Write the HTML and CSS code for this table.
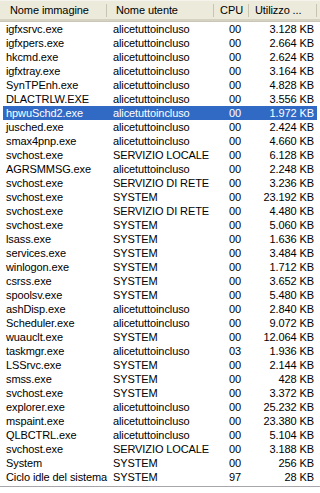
FILE: index.html
```html
<!DOCTYPE html>
<html>
<head>
<meta charset="utf-8">
<link rel="stylesheet" href="styles.css">
</head>
<body>
<div class="list">
  <div class="head">
    <div class="hc c1">Nome immagine</div>
    <div class="hc c2">Nome utente</div>
    <div class="hc c3">CPU</div>
    <div class="hc c4">Utilizzo ...</div>
  </div>
  <div class="rows">
    <div class="row"><span class="d1">igfxsrvc.exe</span><span class="d2">alicetuttoincluso</span><span class="d3">00</span><span class="d4">3.128 KB</span></div>
    <div class="row"><span class="d1">igfxpers.exe</span><span class="d2">alicetuttoincluso</span><span class="d3">00</span><span class="d4">2.664 KB</span></div>
    <div class="row"><span class="d1">hkcmd.exe</span><span class="d2">alicetuttoincluso</span><span class="d3">00</span><span class="d4">2.624 KB</span></div>
    <div class="row"><span class="d1">igfxtray.exe</span><span class="d2">alicetuttoincluso</span><span class="d3">00</span><span class="d4">3.164 KB</span></div>
    <div class="row"><span class="d1">SynTPEnh.exe</span><span class="d2">alicetuttoincluso</span><span class="d3">00</span><span class="d4">4.828 KB</span></div>
    <div class="row"><span class="d1">DLACTRLW.EXE</span><span class="d2">alicetuttoincluso</span><span class="d3">00</span><span class="d4">3.556 KB</span></div>
    <div class="row sel"><span class="d1">hpwuSchd2.exe</span><span class="d2">alicetuttoincluso</span><span class="d3">00</span><span class="d4">1.972 KB</span></div>
    <div class="row"><span class="d1">jusched.exe</span><span class="d2">alicetuttoincluso</span><span class="d3">00</span><span class="d4">2.424 KB</span></div>
    <div class="row"><span class="d1">smax4pnp.exe</span><span class="d2">alicetuttoincluso</span><span class="d3">00</span><span class="d4">4.660 KB</span></div>
    <div class="row"><span class="d1">svchost.exe</span><span class="d2">SERVIZIO LOCALE</span><span class="d3">00</span><span class="d4">6.128 KB</span></div>
    <div class="row"><span class="d1">AGRSMMSG.exe</span><span class="d2">alicetuttoincluso</span><span class="d3">00</span><span class="d4">2.248 KB</span></div>
    <div class="row"><span class="d1">svchost.exe</span><span class="d2">SERVIZIO DI RETE</span><span class="d3">00</span><span class="d4">3.236 KB</span></div>
    <div class="row"><span class="d1">svchost.exe</span><span class="d2">SYSTEM</span><span class="d3">00</span><span class="d4">23.192 KB</span></div>
    <div class="row"><span class="d1">svchost.exe</span><span class="d2">SERVIZIO DI RETE</span><span class="d3">00</span><span class="d4">4.480 KB</span></div>
    <div class="row"><span class="d1">svchost.exe</span><span class="d2">SYSTEM</span><span class="d3">00</span><span class="d4">5.060 KB</span></div>
    <div class="row"><span class="d1">lsass.exe</span><span class="d2">SYSTEM</span><span class="d3">00</span><span class="d4">1.636 KB</span></div>
    <div class="row"><span class="d1">services.exe</span><span class="d2">SYSTEM</span><span class="d3">00</span><span class="d4">3.484 KB</span></div>
    <div class="row"><span class="d1">winlogon.exe</span><span class="d2">SYSTEM</span><span class="d3">00</span><span class="d4">1.712 KB</span></div>
    <div class="row"><span class="d1">csrss.exe</span><span class="d2">SYSTEM</span><span class="d3">00</span><span class="d4">3.652 KB</span></div>
    <div class="row"><span class="d1">spoolsv.exe</span><span class="d2">SYSTEM</span><span class="d3">00</span><span class="d4">5.480 KB</span></div>
    <div class="row"><span class="d1">ashDisp.exe</span><span class="d2">alicetuttoincluso</span><span class="d3">00</span><span class="d4">2.840 KB</span></div>
    <div class="row"><span class="d1">Scheduler.exe</span><span class="d2">alicetuttoincluso</span><span class="d3">00</span><span class="d4">9.072 KB</span></div>
    <div class="row"><span class="d1">wuauclt.exe</span><span class="d2">SYSTEM</span><span class="d3">00</span><span class="d4">12.064 KB</span></div>
    <div class="row"><span class="d1">taskmgr.exe</span><span class="d2">alicetuttoincluso</span><span class="d3">03</span><span class="d4">1.936 KB</span></div>
    <div class="row"><span class="d1">LSSrvc.exe</span><span class="d2">SYSTEM</span><span class="d3">00</span><span class="d4">2.144 KB</span></div>
    <div class="row"><span class="d1">smss.exe</span><span class="d2">SYSTEM</span><span class="d3">00</span><span class="d4">428 KB</span></div>
    <div class="row"><span class="d1">svchost.exe</span><span class="d2">SYSTEM</span><span class="d3">00</span><span class="d4">3.372 KB</span></div>
    <div class="row"><span class="d1">explorer.exe</span><span class="d2">alicetuttoincluso</span><span class="d3">00</span><span class="d4">25.232 KB</span></div>
    <div class="row"><span class="d1">mspaint.exe</span><span class="d2">alicetuttoincluso</span><span class="d3">00</span><span class="d4">23.380 KB</span></div>
    <div class="row"><span class="d1">QLBCTRL.exe</span><span class="d2">alicetuttoincluso</span><span class="d3">00</span><span class="d4">5.104 KB</span></div>
    <div class="row"><span class="d1">svchost.exe</span><span class="d2">SERVIZIO LOCALE</span><span class="d3">00</span><span class="d4">3.188 KB</span></div>
    <div class="row"><span class="d1">System</span><span class="d2">SYSTEM</span><span class="d3">00</span><span class="d4">256 KB</span></div>
    <div class="row"><span class="d1">Ciclo idle del sistema</span><span class="d2">SYSTEM</span><span class="d3">97</span><span class="d4">28 KB</span></div>
  </div>
  <div class="bottom"></div>
</div>
</body>
</html>
```

FILE: styles.css
```css
html, body {
  margin: 0;
  padding: 0;
  background: #ffffff;
}
body {
  width: 320px;
  height: 493px;
  overflow: hidden;
  font-family: "Liberation Sans", Arial, sans-serif;
  font-size: 11px;
  letter-spacing: -0.1px;
  color: #000000;
}
.list {
  display: flex;
  flex-direction: column;
}
.head {
  display: grid;
  grid-template-columns: 107px 107px 35px 68px 3px;
  height: 18px;
  background: #ebeadb;
  border-top: 1px solid #f4f3ee;
  border-bottom: 2px solid #d6d2c2;
  box-shadow: 0 1px 0 #cbc7b8;
  margin-bottom: 1px;
}
.hc {
  line-height: 18px;
  white-space: nowrap;
  overflow: hidden;
  position: relative;
}
.hc::after {
  content: "";
  position: absolute;
  right: 0;
  top: 3px;
  bottom: 2px;
  width: 1px;
  background: #c7c5b2;
  box-shadow: 1px 0 0 #ffffff;
}
.c1 { padding-left: 10px; }
.c2 { padding-left: 9px; }
.c3 { text-align: right; padding-right: 6px; }
.c4 { padding-left: 6px; }
.rows {
  display: flex;
  flex-direction: column;
}
.row {
  display: grid;
  grid-template-columns: 108px 107px 35px 68px;
  height: 14px;
  line-height: 14px;
  white-space: nowrap;
}
.row span { overflow: hidden; }
.d1 { padding-left: 6px; }
.d2 { padding-left: 5px; }
.d3 { text-align: right; padding-right: 9px; }
.d4 { text-align: right; padding-right: 4px; }
.sel {
  color: #ffffff;
  background: linear-gradient(#316ac5, #316ac5) 3px 0 / 314px 100% no-repeat;
}
.bottom {
  margin-top: 2px;
  height: 1px;
  background: #a7a6aa;
}
```
